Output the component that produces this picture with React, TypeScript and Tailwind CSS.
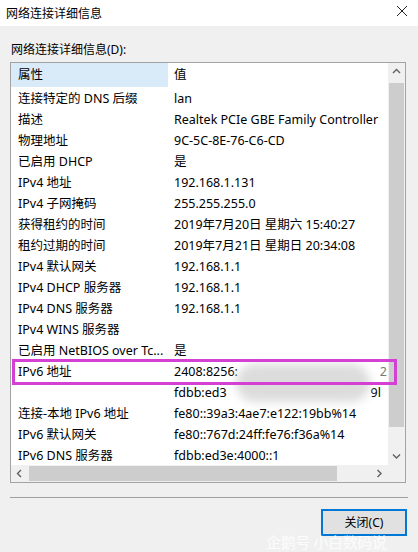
import React from "react";

type Row = { name: string; value: React.ReactNode };

const rows: Row[] = [
  { name: "连接特定的 DNS 后缀", value: "lan" },
  { name: "描述", value: "Realtek PCIe GBE Family Controller" },
  { name: "物理地址", value: "9C-5C-8E-76-C6-CD" },
  { name: "已启用 DHCP", value: "是" },
  { name: "IPv4 地址", value: "192.168.1.131" },
  { name: "IPv4 子网掩码", value: "255.255.255.0" },
  { name: "获得租约的时间", value: "2019年7月20日 星期六 15:40:27" },
  { name: "租约过期的时间", value: "2019年7月21日 星期日 20:34:08" },
  { name: "IPv4 默认网关", value: "192.168.1.1" },
  { name: "IPv4 DHCP 服务器", value: "192.168.1.1" },
  { name: "IPv4 DNS 服务器", value: "192.168.1.1" },
  { name: "IPv4 WINS 服务器", value: "" },
  { name: "已启用 NetBIOS over Tc...", value: "是" },
  {
    name: "IPv6 地址",
    value: (
      <span className="flex w-full justify-between pr-[1px]">
        <span>2408:8256:</span>
        <span className="text-[#777]">2</span>
      </span>
    ),
  },
  {
    name: "",
    value: (
      <span className="flex w-full justify-between pr-[7px]">
        <span>fdbb:ed3</span>
        <span>9l</span>
      </span>
    ),
  },
  { name: "连接-本地 IPv6 地址", value: "fe80::39a3:4ae7:e122:19bb%14" },
  { name: "IPv6 默认网关", value: "fe80::767d:24ff:fe76:f36a%14" },
  { name: "IPv6 DNS 服务器", value: "fdbb:ed3e:4000::1" },
];

function Chevron({ dir }: { dir: "up" | "down" | "left" | "right" }) {
  const pts = {
    up: "1,5 4.5,1.5 8,5",
    down: "1,1.5 4.5,5 8,1.5",
    left: "5,1 1.5,4.5 5,8",
    right: "1.5,1 5,4.5 1.5,8",
  }[dir];
  const vertical = dir === "up" || dir === "down";
  return (
    <svg width={vertical ? 9 : 7} height={vertical ? 7 : 9} viewBox={vertical ? "0 0 9 7" : "0 0 7 9"}>
      <polyline points={pts} fill="none" stroke="#606060" strokeWidth="1.4" />
    </svg>
  );
}

export default function App() {
  return (
    <div className="relative w-[418px] h-[552px] overflow-hidden bg-[#f0f0f0] text-[12px] text-black font-['Noto_Sans','Noto_Sans_CJK_SC',sans-serif]">
      {/* Title bar */}
      <div className="h-[26px] bg-white flex items-center justify-between pl-[6px] pr-[10px]">
        <span className="leading-none pt-[2px]">网络连接详细信息</span>
        <svg width="12" height="12" viewBox="0 0 12 12" className="mb-[4px]">
          <path d="M1 1 L11 11 M11 1 L1 11" stroke="#222" strokeWidth="1" />
        </svg>
      </div>

      {/* Label */}
      <div className="pl-[11px] pt-[16px] h-[36px] leading-[16px]">网络连接详细信息(D):</div>

      {/* List view */}
      <div className="mx-[10px] w-[396px] border border-[#a3a3a3] bg-white flex flex-col text-[12.5px]">
        <div className="flex h-[402px]">
          <div className="w-[377px] overflow-hidden">
            <div className="flex h-[24px] items-center">
              <div className="w-[157px] h-full bg-[#d9ebf9] pl-[7px] pt-[1px] flex items-center">属性</div>
              <div className="pl-[6px] pt-[1px]">值</div>
            </div>
            {rows.map((r, i) => (
              <div key={i} className="flex h-[21px] items-center pt-[3px] whitespace-nowrap">
                <div className="w-[157px] pl-[7px] shrink-0">{r.name}</div>
                <div className="pl-[6px] flex-1 flex">{r.value}</div>
              </div>
            ))}
          </div>
          {/* Vertical scrollbar */}
          <div className="w-[17px] bg-[#f0f0f0] flex flex-col items-center">
            <div className="h-[17px] flex items-center justify-center">
              <Chevron dir="up" />
            </div>
            <div className="flex-1 w-full px-[1px] pt-[3px]">
              <div className="h-[344px] bg-[#cdcdcd]" />
            </div>
            <div className="h-[17px] flex items-center justify-center">
              <Chevron dir="down" />
            </div>
          </div>
        </div>
        {/* Horizontal scrollbar */}
        <div className="flex h-[17px]">
          <div className="w-[377px] bg-[#f0f0f0] flex items-center">
            <div className="w-[17px] flex items-center justify-center">
              <Chevron dir="left" />
            </div>
            <div className="w-[308px] h-[15px] bg-[#cdcdcd] ml-[1px]" />
            <div className="flex-1" />
            <div className="w-[17px] flex items-center justify-center">
              <Chevron dir="right" />
            </div>
          </div>
          <div className="w-[17px] bg-[#f0f0f0]" />
        </div>
      </div>

      {/* Separator */}
      <div className="mx-[10px] mt-[14px] border-t border-[#a0a0a0]" />

      {/* Button */}
      <div className="flex justify-end pr-[11px] pt-[11px]">
        <button className="w-[86px] h-[27px] border-2 border-[#0078d7] bg-[#e1e1e1] flex items-center justify-center">
          关闭(C)
        </button>
      </div>

      {/* Blur over hidden address */}
      <div className="absolute left-[236px] top-[364px] w-[134px] h-[38px] rounded-full bg-[#dcdcdc] blur-[5px]" />

      {/* Highlight box */}
      <div className="absolute left-[12px] top-[359px] w-[385px] h-[26px] border-[3px] border-[#d43fd4]" />

      {/* Watermark */}
      <div className="absolute left-[266px] top-[531px] text-[15px] text-white/80 tracking-tight">
        企鹅号 小白数码说
      </div>
    </div>
  );
}
